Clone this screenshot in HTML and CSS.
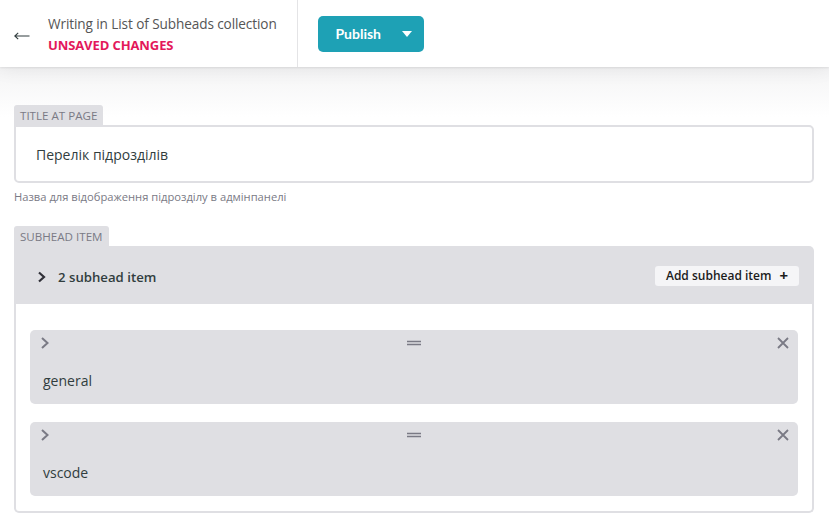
FILE: index.html
```html
<!DOCTYPE html>
<html>
<head>
<meta charset="utf-8">
<link rel="stylesheet" href="styles.css">
</head>
<body>
<header class="topbar">
  <div class="back">
    <svg class="arrow" width="16" height="8" viewBox="0 0 16 8"><path d="M0.8 4 H15.5 M4.2 0.8 L0.8 4 L4.2 7.2" fill="none" stroke="#313d3e" stroke-width="1.1"/></svg>
    <div class="status">
      <div class="status-title">Writing in List of Subheads collection</div>
      <div class="status-unsaved">UNSAVED CHANGES</div>
    </div>
  </div>
  <div class="actions">
    <button class="publish">Publish <span class="caret"></span></button>
  </div>
</header>
<main class="pane">
  <div class="field">
    <div class="label">TITLE AT PAGE</div>
    <div class="input">Перелік підрозділів</div>
    <div class="hint">Назва для відображення підрозділу в адмінпанелі</div>
  </div>
  <div class="field list-field">
    <div class="label">SUBHEAD ITEM</div>
    <div class="list-head">
      <div class="list-title">
        <svg class="chev" width="10" height="12" viewBox="0 0 10 12"><path d="M2 1.5 L7 6 L2 10.5" fill="none" stroke="#303038" stroke-width="2.2"/></svg>
        <span>2 subhead item</span>
      </div>
      <button class="add">Add subhead item <span class="plus">+</span></button>
    </div>
    <div class="list-body">
      <div class="item">
        <div class="item-top">
          <svg class="chev" width="10" height="14" viewBox="0 0 10 14"><path d="M2 2 L7.5 7 L2 12" fill="none" stroke="#7a7a85" stroke-width="2"/></svg>
          <svg width="16" height="6" viewBox="0 0 16 6"><path d="M1 1.5 H15 M1 4.5 H15" stroke="#7a7a85" stroke-width="1.3"/></svg>
          <svg width="12" height="12" viewBox="0 0 12 12"><path d="M1 1 L11 11 M11 1 L1 11" stroke="#7a7a85" stroke-width="1.8"/></svg>
        </div>
        <div class="item-text">general</div>
      </div>
      <div class="item">
        <div class="item-top">
          <svg class="chev" width="10" height="14" viewBox="0 0 10 14"><path d="M2 2 L7.5 7 L2 12" fill="none" stroke="#7a7a85" stroke-width="2"/></svg>
          <svg width="16" height="6" viewBox="0 0 16 6"><path d="M1 1.5 H15 M1 4.5 H15" stroke="#7a7a85" stroke-width="1.3"/></svg>
          <svg width="12" height="12" viewBox="0 0 12 12"><path d="M1 1 L11 11 M11 1 L1 11" stroke="#7a7a85" stroke-width="1.8"/></svg>
        </div>
        <div class="item-text">vscode</div>
      </div>
    </div>
  </div>
</main>
</body>
</html>
```
FILE: styles.css
```css
* { box-sizing: border-box; }
html, body { margin: 0; padding: 0; }
body {
  font-family: "Open Sans", "Noto Sans", sans-serif;
  background: #fff;
  width: 829px;
  height: 525px;
  overflow: hidden;
  color: #313d3e;
}
.topbar {
  height: 67px;
  display: flex;
  background: #fff;
  box-shadow: 0 2px 18px rgba(0,0,0,0.07), 0 1px 2px rgba(0,0,0,0.08);
  position: relative;
  z-index: 1;
}
.back {
  width: 298px;
  border-right: 1px solid #e4e4e6;
  display: flex;
  align-items: center;
  padding-left: 14px;
}
.arrow {
  margin-right: 18px;
  margin-top: 4px;
}
.status { display: flex; flex-direction: column; gap: 3px; margin-top: 1px; }
.status-title { font-size: 13.6px; color: #555; letter-spacing: -0.1px; }
.status-unsaved { font-size: 13px; font-weight: 700; color: #e3185b; letter-spacing: -0.1px; }
.actions { display: flex; align-items: center; padding-left: 20px; }
.publish {
  width: 106px;
  height: 36px;
  border: 0;
  border-radius: 5px;
  background: #1ea1b5;
  color: #fff;
  font-family: "Lato", sans-serif;
  font-weight: 700;
  font-size: 14px;
  display: flex;
  align-items: center;
  justify-content: flex-end;
  padding: 0 12px 0 0;
  gap: 21px;
}
.caret {
  width: 0; height: 0;
  border-left: 5px solid transparent;
  border-right: 5px solid transparent;
  border-top: 6px solid #fff;
}
.pane {
  padding: 38px 15px 0 14px;
  background: linear-gradient(#f4f4f5, #fff 50px);
  height: 458px;
}
.field { display: flex; flex-direction: column; align-items: flex-start; }
.label {
  background: #dfdfe3;
  color: #7a7a85;
  font-size: 11.6px;
  padding: 3px 6px 0 6px;
  border-radius: 3px 3px 0 0;
  height: 20px;
}
.input {
  align-self: stretch;
  height: 58px;
  border: 2px solid #dfdfe3;
  border-radius: 0 5px 5px 5px;
  padding: 0 20px;
  display: flex;
  align-items: center;
  font-size: 14px;
  color: #313d3e;
}
.hint {
  font-size: 11.2px;
  color: #7a7a85;
  margin-top: 6px;
  height: 15px;
  line-height: 15px;
}
.list-field { margin-top: 22px; }
.list-head {
  align-self: stretch;
  background: #dfdfe3;
  height: 58px;
  display: flex;
  align-items: center;
  justify-content: space-between;
  padding: 0 15px 0 23px;
  border-radius: 0 5px 0 0;
}
.list-title { display: flex; align-items: center; gap: 11px; font-size: 13.2px; font-weight: 600; color: #313d3e; margin-top: 3px; }
.add {
  background: #f5f5f7;
  border: 0;
  border-radius: 3px;
  height: 20px;
  width: 144px;
  font-family: "Open Sans", sans-serif;
  font-size: 12px;
  font-weight: 600;
  color: #1c1c1c;
  display: flex;
  align-items: center;
  justify-content: center;
  gap: 8px;
  margin-top: 1px;
}
.plus { font-size: 15px; font-weight: 700; line-height: 1; }
.list-body {
  align-self: stretch;
  border: 2px solid #dfdfe3;
  border-top: 0;
  border-radius: 0 0 5px 5px;
  padding: 26px 14px 15px 14px;
  display: flex;
  flex-direction: column;
  gap: 18px;
}
.item {
  background: #dfdfe3;
  border-radius: 5px;
  height: 74px;
  padding: 5px 9px 0 10px;
}
.item-top {
  display: flex;
  justify-content: space-between;
  align-items: center;
  height: 16px;
}
.item-text { font-size: 14px; color: #313d3e; margin-top: 20px; padding-left: 3px; }
```
